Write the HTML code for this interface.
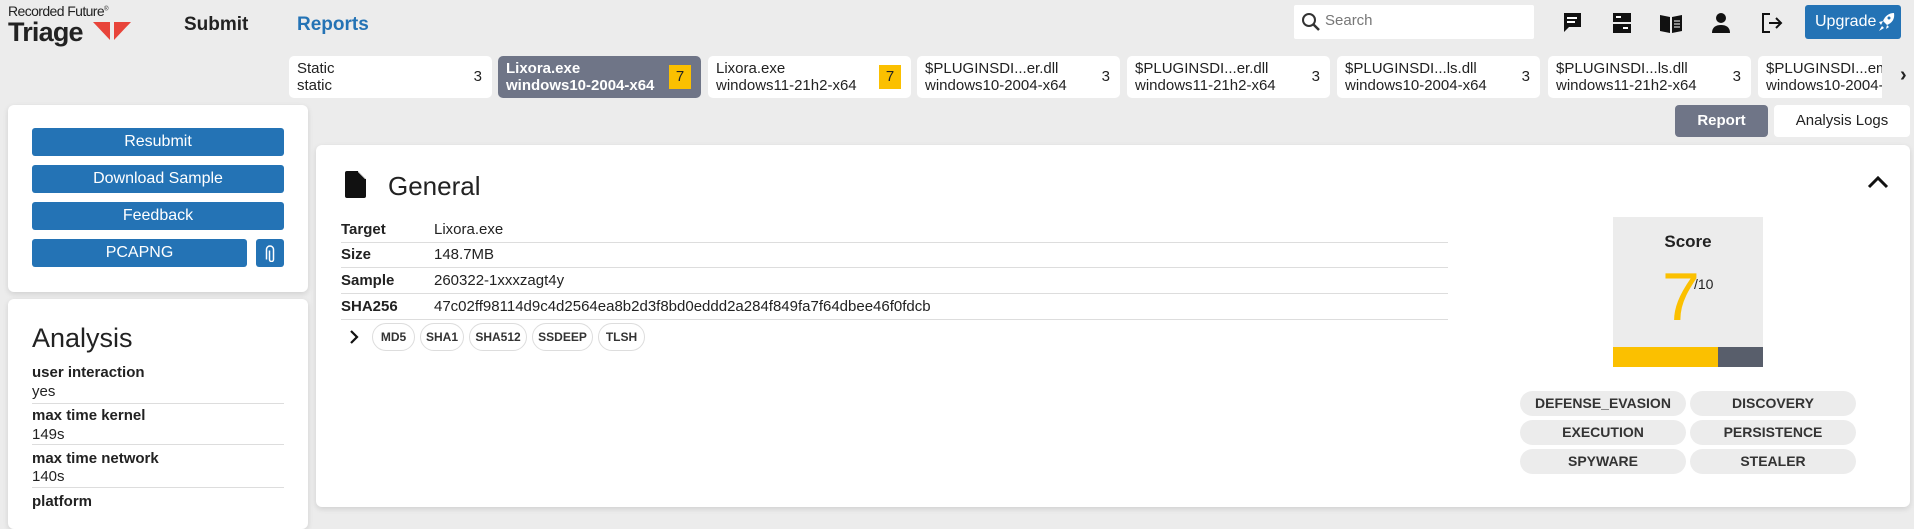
<!DOCTYPE html>
<html><head><meta charset="utf-8"><style>
*{box-sizing:border-box;margin:0;padding:0}
body{width:1914px;height:514px;overflow:hidden;background:#ececec;font-family:"Liberation Sans",Arial,sans-serif;color:#222;position:relative}
.a{position:absolute}
.card{position:absolute;background:#fff;border-radius:6px;box-shadow:0 2px 6px rgba(0,0,0,.12)}
.btn{position:absolute;background:#2473b5;color:#fff;border-radius:3px;font-size:16px;display:flex;align-items:center;justify-content:center}
.tab{position:absolute;top:56px;height:42px;width:203px;background:#fff;border-radius:5px;font-size:15px;line-height:17px;padding:4px 8px;color:#222}
.tab .n{position:absolute;right:10px;top:12px;font-size:15px}
.tab .y{position:absolute;right:10px;top:9px;width:22px;height:24px;background:#fbc000;color:#222;text-align:center;line-height:24px;font-size:15px}
.row{position:absolute;left:341px;width:1107px;height:26px;border-bottom:1px solid #ddd;font-size:15px;line-height:26px}
.row b{display:inline-block;width:93px}
.pill{position:absolute;top:323px;height:28px;border:1px solid #ddd;border-radius:14px;font-size:12px;font-weight:bold;line-height:26px;text-align:center;color:#333}
.tag{position:absolute;width:166px;height:25px;background:#ececec;border-radius:13px;font-size:14px;font-weight:bold;text-align:center;line-height:25px;color:#333}
.it{position:absolute;left:32px;font-size:15px}
.ln{position:absolute;left:32px;width:252px;border-top:1px solid #ddd}
</style></head><body>
<div class="a" style="left:8px;top:3px;font-size:14px;letter-spacing:-0.6px;color:#222">Recorded Future<sup style="font-size:6px">®</sup></div>
<div class="a" style="left:8px;top:17px;font-size:27px;font-weight:bold;letter-spacing:-0.8px;color:#222">Triage</div>
<svg class="a" style="left:93px;top:22px" width="40" height="20"><polygon points="0,0 17,0 17,18" fill="#e8443a"/><polygon points="21,0 38,0 21,18" fill="#e8443a"/></svg>
<div class="a" style="left:184px;top:14px;font-size:19px;font-weight:bold">Submit</div>
<div class="a" style="left:297px;top:14px;font-size:19px;font-weight:bold;color:#2473b5">Reports</div>
<div class="a" style="left:1294px;top:5px;width:240px;height:34px;background:#fff;border-radius:2px"></div>
<svg class="a" style="left:1301px;top:12px" width="20" height="20"><circle cx="8" cy="8" r="6" fill="none" stroke="#333" stroke-width="2"/><line x1="12.5" y1="12.5" x2="18" y2="18" stroke="#333" stroke-width="2.5"/></svg>
<div class="a" style="left:1325px;top:12px;font-size:15px;color:#777">Search</div>
<svg class="a" style="left:1561px;top:11px" width="22" height="24"><path d="M2 2h18v14H8l-5 5V2z" fill="#111"/><rect x="6" y="6" width="10" height="2" fill="#fff"/><rect x="6" y="10" width="8" height="2" fill="#fff"/></svg>
<svg class="a" style="left:1611px;top:12px" width="22" height="22"><rect x="2" y="1" width="18" height="9" fill="#111"/><rect x="2" y="12" width="18" height="9" fill="#111"/><rect x="5" y="4" width="5" height="2" fill="#fff"/><rect x="12" y="15" width="5" height="2" fill="#fff"/></svg>
<svg class="a" style="left:1659px;top:12px" width="24" height="22"><path d="M1 3 L11 5 L11 21 L1 19Z M13 5 L23 3 L23 19 L13 21Z" fill="#111"/><path d="M15 9h6M15 12h6M15 15h6" stroke="#fff" stroke-width="1"/></svg>
<svg class="a" style="left:1711px;top:12px" width="20" height="22"><circle cx="10" cy="6" r="5" fill="#111"/><path d="M1 21c0-6 4-8 9-8s9 2 9 8z" fill="#111"/></svg>
<svg class="a" style="left:1760px;top:11px" width="24" height="24"><path d="M10 3H3v18h7" fill="none" stroke="#111" stroke-width="2"/><path d="M9 12h12M16 7l5 5-5 5" fill="none" stroke="#111" stroke-width="2"/></svg>
<div class="a" style="left:1805px;top:5px;width:96px;height:34px;background:#2473b5;border-radius:3px;color:#fff;font-size:16px;line-height:34px;padding-left:10px">Upgrade</div>
<svg class="a" style="left:1878px;top:12px" width="18" height="20"><path d="M16 1c-5 0-9 3-11 8l4 4c5-2 8-6 7-12z" fill="#fff"/><path d="M5 9l-4 1 2 3zM9 13l-1 4 3-2z" fill="#fff"/><path d="M4 14l-3 5 5-3z" fill="#fff"/><circle cx="11" cy="6" r="1.5" fill="#2473b5"/></svg>

<div class="tab" style="left:289px">Static<br>static<span class="n">3</span></div>
<div class="tab" style="left:498px;background:#6f7587;color:#fff;font-weight:bold">Lixora.exe<br>windows10-2004-x64<span class="y" style="font-weight:normal">7</span></div>
<div class="tab" style="left:708px">Lixora.exe<br>windows11-21h2-x64<span class="y">7</span></div>
<div class="tab" style="left:917px">$PLUGINSDI...er.dll<br>windows10-2004-x64<span class="n">3</span></div>
<div class="tab" style="left:1127px">$PLUGINSDI...er.dll<br>windows11-21h2-x64<span class="n">3</span></div>
<div class="tab" style="left:1337px">$PLUGINSDI...ls.dll<br>windows10-2004-x64<span class="n">3</span></div>
<div class="tab" style="left:1548px">$PLUGINSDI...ls.dll<br>windows11-21h2-x64<span class="n">3</span></div>
<div class="tab" style="left:1758px;width:124px;overflow:hidden;white-space:nowrap;border-radius:5px 0 0 5px">$PLUGINSDI...em<br>windows10-2004-x64</div>
<div class="a" style="left:1900px;top:64px;font-size:20px;font-weight:bold">›</div>

<div class="card" style="left:8px;top:105px;width:300px;height:187px"></div>
<div class="btn" style="left:32px;top:128px;width:252px;height:28px">Resubmit</div>
<div class="btn" style="left:32px;top:165px;width:252px;height:28px">Download Sample</div>
<div class="btn" style="left:32px;top:202px;width:252px;height:28px">Feedback</div>
<div class="btn" style="left:32px;top:239px;width:215px;height:28px">PCAPNG</div>
<div class="btn" style="left:256px;top:239px;width:28px;height:28px"><svg width="10" height="18"><path d="M3 5v9a2 2 0 0 0 4 0V4a3.5 3.5 0 0 0-7 0v10" fill="none" stroke="#fff" stroke-width="1.5" transform="translate(1.5 1.5)"/></svg></div>

<div class="card" style="left:8px;top:299px;width:300px;height:230px"></div>
<div class="a" style="left:32px;top:323px;font-size:27px">Analysis</div>
<div class="it" style="top:364px;font-weight:bold">user interaction</div>
<div class="it" style="top:383px">yes</div>
<div class="ln" style="top:403px"></div>
<div class="it" style="top:407px;font-weight:bold">max time kernel</div>
<div class="it" style="top:426px">149s</div>
<div class="ln" style="top:444px"></div>
<div class="it" style="top:450px;font-weight:bold">max time network</div>
<div class="it" style="top:468px">140s</div>
<div class="ln" style="top:487px"></div>
<div class="it" style="top:493px;font-weight:bold">platform</div>

<div class="a" style="left:1675px;top:105px;width:93px;height:32px;background:#6f7587;border-radius:4px;color:#fff;font-weight:bold;font-size:15px;text-align:center;line-height:32px">Report</div>
<div class="a" style="left:1774px;top:105px;width:136px;height:32px;background:#fff;border-radius:4px;font-size:15px;text-align:center;line-height:32px">Analysis Logs</div>

<div class="card" style="left:316px;top:145px;width:1594px;height:362px"></div>
<svg class="a" style="left:345px;top:171px" width="21" height="27"><path d="M2 0h11l8 8v17a2 2 0 0 1-2 2H2a2 2 0 0 1-2-2V2a2 2 0 0 1 2-2z" fill="#111"/><path d="M13 0v8h8" fill="#fff"/><path d="M13 1l7 7h-7z" fill="#111"/></svg>
<div class="a" style="left:388px;top:171px;font-size:26px">General</div>
<svg class="a" style="left:1867px;top:175px" width="22" height="14"><path d="M2 12l9-9 9 9" fill="none" stroke="#111" stroke-width="3"/></svg>

<div class="row" style="top:217px"><b>Target</b>Lixora.exe</div>
<div class="row" style="top:242px"><b>Size</b>148.7MB</div>
<div class="row" style="top:268px"><b>Sample</b>260322-1xxxzagt4y</div>
<div class="row" style="top:294px"><b>SHA256</b>47c02ff98114d9c4d2564ea8b2d3f8bd0eddd2a284f849fa7f64dbee46f0fdcb</div>
<svg class="a" style="left:349px;top:329px" width="10" height="16"><path d="M2 2l6 6-6 6" fill="none" stroke="#111" stroke-width="2.2"/></svg>
<div class="pill" style="left:372px;width:43px">MD5</div>
<div class="pill" style="left:420px;width:44px">SHA1</div>
<div class="pill" style="left:469px;width:58px">SHA512</div>
<div class="pill" style="left:532px;width:61px">SSDEEP</div>
<div class="pill" style="left:598px;width:47px">TLSH</div>

<div class="a" style="left:1613px;top:217px;width:150px;height:150px;background:#ececec"></div>
<div class="a" style="left:1613px;top:232px;width:150px;text-align:center;font-size:17px;font-weight:bold">Score</div>
<div class="a" style="left:1662px;top:263px;font-size:68px;color:#fbc000;line-height:68px">7</div>
<div class="a" style="left:1694px;top:276px;font-size:14px">/10</div>
<div class="a" style="left:1613px;top:347px;width:105px;height:20px;background:#fbc000"></div>
<div class="a" style="left:1718px;top:347px;width:45px;height:20px;background:#585e6b"></div>

<div class="tag" style="left:1520px;top:391px">DEFENSE_EVASION</div>
<div class="tag" style="left:1690px;top:391px">DISCOVERY</div>
<div class="tag" style="left:1520px;top:420px">EXECUTION</div>
<div class="tag" style="left:1690px;top:420px">PERSISTENCE</div>
<div class="tag" style="left:1520px;top:449px">SPYWARE</div>
<div class="tag" style="left:1690px;top:449px">STEALER</div>
</body></html>
